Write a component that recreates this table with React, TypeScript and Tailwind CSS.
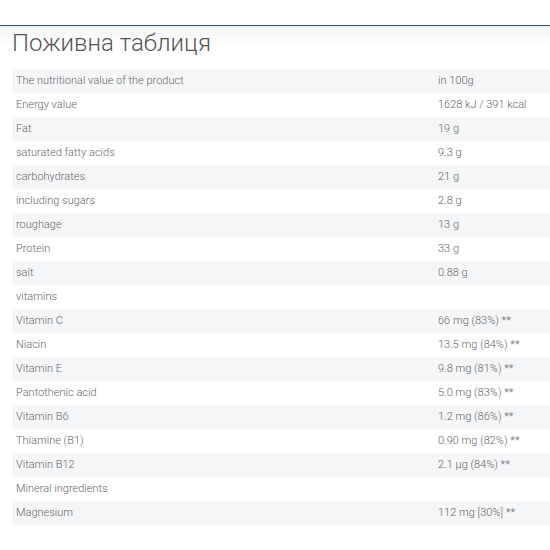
const rows: [string, string][] = [
  ["The nutritional value of the product", "in 100g"],
  ["Energy value", "1628 kJ / 391 kcal"],
  ["Fat", "19 g"],
  ["saturated fatty acids", "9.3 g"],
  ["carbohydrates", "21 g"],
  ["including sugars", "2.8 g"],
  ["roughage", "13 g"],
  ["Protein", "33 g"],
  ["salt", "0.88 g"],
  ["vitamins", ""],
  ["Vitamin C", "66 mg (83%) **"],
  ["Niacin", "13.5 mg (84%) **"],
  ["Vitamin E", "9.8 mg (81%) **"],
  ["Pantothenic acid", "5.0 mg (83%) **"],
  ["Vitamin B6", "1.2 mg (86%) **"],
  ["Thiamine (B1)", "0.90 mg (82%) **"],
  ["Vitamin B12", "2.1 µg (84%) **"],
  ["Mineral ingredients", ""],
  ["Magnesium", "112 mg [30%] **"],
];

export default function App() {
  return (
    <div className="h-[550px] w-[550px] overflow-hidden bg-white font-['Roboto',sans-serif]">
      <div className="h-[25px]" />
      <div className="h-px bg-[#2f4f6a]" />
      <div className="bg-gradient-to-b from-[#f3f3f3] to-white to-[20px] pl-3">
        <h2 className="pt-[2px] text-[24px] leading-[30px] font-light text-[#555]">Поживна таблиця</h2>
        <table className="mt-[11px] w-[538px] border-collapse text-[11px] font-light text-[#666]">
          <tbody>
            {rows.map(([name, value], i) => (
              <tr key={i} className={i % 2 === 0 ? "bg-[#f5f6f8]" : "bg-white"}>
                <td className="h-6 w-[421px] pl-1 align-middle">{name}</td>
                <td className="h-6 pl-[5px] align-middle">{value}</td>
              </tr>
            ))}
          </tbody>
        </table>
      </div>
    </div>
  );
}
